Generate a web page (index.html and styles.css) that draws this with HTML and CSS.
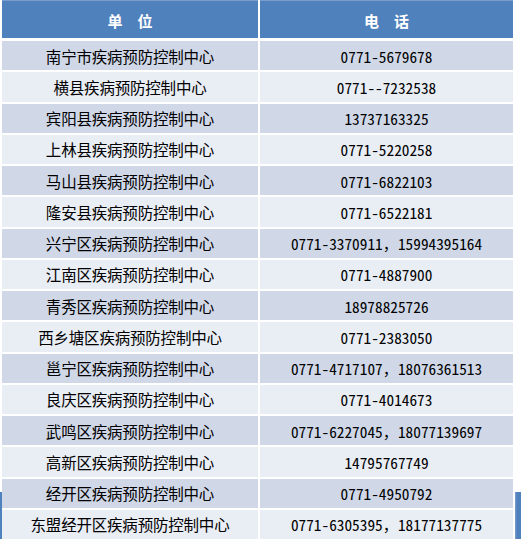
FILE: index.html
```html
<!DOCTYPE html>
<html lang="zh-CN">
<head>
<meta charset="utf-8">
<title>疾病预防控制中心电话</title>
<link rel="stylesheet" href="styles.css">
</head>
<body>
<div class="table">
  <div class="cell head">单　位</div><div class="cell head">电　话</div>
  <div class="cell name odd">南宁市疾病预防控制中心</div><div class="cell tel odd">0771-5679678</div>
  <div class="cell name even">横县疾病预防控制中心</div><div class="cell tel even">0771--7232538</div>
  <div class="cell name odd">宾阳县疾病预防控制中心</div><div class="cell tel odd">13737163325</div>
  <div class="cell name even">上林县疾病预防控制中心</div><div class="cell tel even">0771-5220258</div>
  <div class="cell name odd">马山县疾病预防控制中心</div><div class="cell tel odd">0771-6822103</div>
  <div class="cell name even">隆安县疾病预防控制中心</div><div class="cell tel even">0771-6522181</div>
  <div class="cell name odd">兴宁区疾病预防控制中心</div><div class="cell tel odd">0771-3370911，15994395164</div>
  <div class="cell name even">江南区疾病预防控制中心</div><div class="cell tel even">0771-4887900</div>
  <div class="cell name odd">青秀区疾病预防控制中心</div><div class="cell tel odd">18978825726</div>
  <div class="cell name even">西乡塘区疾病预防控制中心</div><div class="cell tel even">0771-2383050</div>
  <div class="cell name odd">邕宁区疾病预防控制中心</div><div class="cell tel odd">0771-4717107，18076361513</div>
  <div class="cell name even">良庆区疾病预防控制中心</div><div class="cell tel even">0771-4014673</div>
  <div class="cell name odd">武鸣区疾病预防控制中心</div><div class="cell tel odd">0771-6227045，18077139697</div>
  <div class="cell name even">高新区疾病预防控制中心</div><div class="cell tel even">14795767749</div>
  <div class="cell name odd">经开区疾病预防控制中心</div><div class="cell tel odd">0771-4950792</div>
  <div class="cell name even">东盟经开区疾病预防控制中心</div><div class="cell tel even">0771-6305395，18177137775</div>
</div>
</body>
</html>
```
FILE: styles.css
```css
html, body {
  margin: 0;
  padding: 0;
}
body {
  width: 521px;
  height: 539px;
  overflow: hidden;
  background-color: #ffffff;
  background-image:
    linear-gradient(#4f81bd, #4f81bd),
    linear-gradient(90deg, #7f9fcc 0, #4f81bd 2px, #4f81bd 100%);
  background-repeat: no-repeat;
  background-size: 2px 47px, 6px 47px;
  background-position: 0 492px, 515px 492px;
  font-family: "Noto Sans Mono CJK SC", "Noto Sans CJK SC", monospace;
  color: #000;
}
.table {
  margin-left: 2px;
  width: 511px;
  display: grid;
  grid-template-columns: 256px 253px;
  grid-template-rows: 39px repeat(16, 29.25px);
  column-gap: 2px;
  row-gap: 2px;
}
.cell {
  display: flex;
  align-items: center;
  justify-content: center;
  white-space: nowrap;
}
.head {
  background: #4f81bd;
  border-top: 1px solid #7b9ccc;
  box-sizing: border-box;
  color: #ffffff;
  font-weight: bold;
  font-size: 15px;
  padding-top: 2px;
  margin-bottom: 1px;
}
.name {
  font-size: 15.5px;
  letter-spacing: -0.2px;
}
.tel {
  font-size: 15.3px;
  letter-spacing: 0;
}
.odd {
  background: #d0d8e8;
}
.even {
  background: #e9edf4;
}
```
